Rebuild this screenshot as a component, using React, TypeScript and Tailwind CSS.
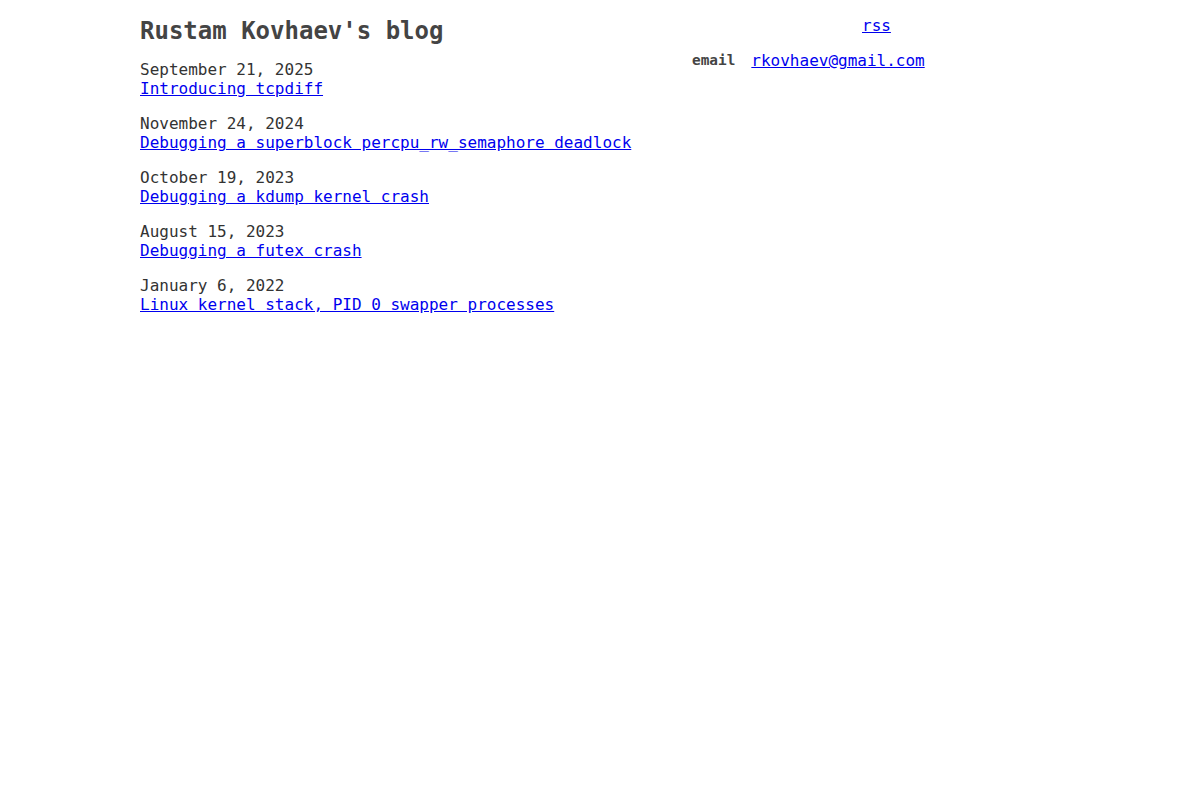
import React from 'react';

type Post = { date: string; title: string };

const posts: Post[] = [
  { date: 'September 21, 2025', title: 'Introducing tcpdiff' },
  { date: 'November 24, 2024', title: 'Debugging a superblock percpu_rw_semaphore deadlock' },
  { date: 'October 19, 2023', title: 'Debugging a kdump kernel crash' },
  { date: 'August 15, 2023', title: 'Debugging a futex crash' },
  { date: 'January 6, 2022', title: 'Linux kernel stack, PID 0 swapper processes' },
];

const App: React.FC = () => {
  return (
    <div
      className="min-h-[800px] bg-white text-[#333] text-[16px] leading-[19px]"
      style={{ fontFamily: '"DejaVu Sans Mono", "Liberation Mono", monospace' }}
    >
      <div className="flex pl-[140px]">
        <div className="w-[552px] pt-[17px]">
          <h1 className="text-[24px] leading-[28px] font-bold text-[#444]">Rustam Kovhaev's blog</h1>
          <div className="mt-[15px] flex flex-col gap-4">
            {posts.map((post) => (
              <div key={post.title}>
                <div>{post.date}</div>
                <a href="#" className="text-[#0000ee] underline">
                  {post.title}
                </a>
              </div>
            ))}
          </div>
        </div>

        <div className="pt-4">
          <div className="ml-[170px]">
            <a href="#" className="text-[#0000ee] underline">
              rss
            </a>
          </div>
          <div className="mt-4 flex items-center gap-[16px]">
            <span className="text-[14.4px] font-bold text-[#444]">email</span>
            <a href="#" className="text-[#0000ee] underline">
              rkovhaev@gmail.com
            </a>
          </div>
        </div>
      </div>
    </div>
  );
};

export default App;
